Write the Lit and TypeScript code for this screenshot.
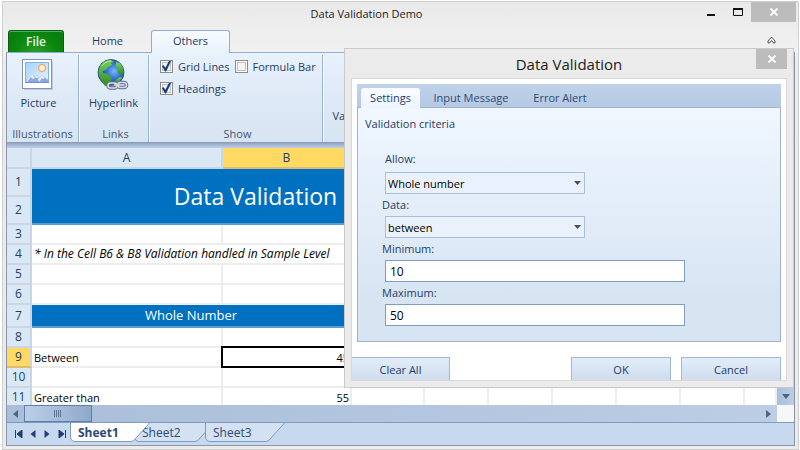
import { LitElement, html, css, svg, nothing } from "lit";
import { customElement, state } from "lit/decorators.js";
import { classMap } from "lit/directives/class-map.js";

interface Cell {
  text?: string;
  span?: number;
  cls?: string;
}

interface Row {
  n: number;
  size?: string;
  cells: Cell[];
}

const COLUMNS = ["A", "B", "C", "D", "E", "F", "G", "H", "I"];

const ROWS: Row[] = [
  { n: 1, size: "tall", cells: [] },
  { n: 2, size: "tall", cells: [] },
  { n: 3, cells: [] },
  { n: 4, cells: [{ text: "* In the Cell B6 & B8 Validation handled in Sample Level", span: 3, cls: "note" }] },
  { n: 5, cells: [] },
  { n: 6, cells: [] },
  { n: 7, size: "medium", cells: [{ text: "Whole Number", span: 2, cls: "banner" }] },
  { n: 8, cells: [] },
  { n: 9, cells: [{ text: "Between" }, { text: "45", cls: "num active" }] },
  { n: 10, cells: [] },
  { n: 11, cells: [{ text: "Greater than" }, { text: "55", cls: "num" }] },
];

const pictureIcon = svg`<svg width="32" height="32" viewBox="0 0 32 32" aria-hidden="true">
  <defs><linearGradient id="sky" x1="0" y1="0" x2="1" y2="1">
    <stop offset="0" stop-color="#a4d2f8"/><stop offset="1" stop-color="#e6f4ff"/></linearGradient></defs>
  <rect x="2" y="2" width="29" height="29" fill="#8ea3c0" opacity=".45"/>
  <rect x="0.5" y="0.5" width="29" height="29" fill="#fff" stroke="#8593ad"/>
  <rect x="3.5" y="3.5" width="23" height="20" fill="url(#sky)" stroke="#7db3ea"/>
  <circle cx="20" cy="9" r="3.5" fill="#fff3d8" stroke="#f0ad75" stroke-width="1.5"/>
  <path d="M4 23v-2l6-6 2 2 2 2 2 0 4-3 6 5v2z" fill="#8fa9e0"/>
  <path d="M4 22l6-7 3 4-2 1-2-2-4 5zM16 20l4-4 3 3-2 1-1-1-3 4z" fill="#e9f0ff"/>
  <path d="M3 23.5h24" stroke="#6b8fd4"/>
</svg>`;

const globeIcon = svg`<svg width="32" height="32" viewBox="0 0 32 32" aria-hidden="true">
  <defs><radialGradient id="sea" cx=".62" cy=".45" r=".6">
    <stop offset="0" stop-color="#7db8f5"/><stop offset=".5" stop-color="#2f6fd0"/><stop offset="1" stop-color="#173c8c"/></radialGradient>
    <linearGradient id="land" x1="0" y1="0" x2="0" y2="1">
    <stop offset="0" stop-color="#79d058"/><stop offset="1" stop-color="#2c8a2a"/></linearGradient></defs>
  <circle cx="14" cy="13.5" r="13" fill="url(#sea)" stroke="#27447c" stroke-width=".8"/>
  <path d="M3 7C6 2.5 10 1 14 1l3 2-3 1 1 2-4 2-2 3-3 1 0 2 4 1 5 3-1 4-3 4-3 1C4 21 1 17 1.5 12z" fill="url(#land)"/>
  <path d="M19 3l4 1 3 5 .5 5-3 2-3-3 1-3-3-3z" fill="url(#land)"/>
  <path d="M19 21l4-3 2 1-4 5-3 1z" fill="url(#land)"/>
  <path d="M5 7c3-4 6-5 9-5" stroke="#c9f0c0" stroke-width="1" fill="none" opacity=".8"/>
  <g fill="none" stroke="#5e6a82" stroke-width="3.6">
    <rect x="11" y="24" width="9" height="5" rx="2.5"/><rect x="21" y="23.5" width="8.5" height="5" rx="2.5"/><path d="M17 26h8"/></g>
  <g fill="none" stroke="#d5dbe6" stroke-width="1.6">
    <rect x="11" y="24" width="9" height="5" rx="2.5"/><rect x="21" y="23.5" width="8.5" height="5" rx="2.5"/><path d="M17 26h8"/></g>
</svg>`;

const validationIcon = svg`<svg width="32" height="32" viewBox="0 0 32 32" aria-hidden="true">
  <rect x="2.5" y="3.5" width="26" height="24" fill="#fff" stroke="#7f8ea8"/>
  <path d="M3 11.5h25M3 19.5h25M15.5 4v23" stroke="#9fb0c8"/>
</svg>`;

const cross = svg`<svg width="10" height="8" viewBox="0 0 10 8" aria-hidden="true">
  <path d="M1.5 0.5l7 7M8.5 0.5l-7 7" stroke="#fff" stroke-width="1.8"/></svg>`;

@customElement("app-ribbon")
export class AppRibbon extends LitElement {
  static styles = css`
    :host { display: block; color: #1e3c66; }
    button { font: inherit; color: inherit; background: none; border: 0; padding: 0; margin: 0; }
    .tabs { display: flex; align-items: stretch; height: 22px; margin-left: 2px; }
    .tabs button { padding-bottom: 2px; }
    .tabs .file {
      width: 56px; color: #eaf8e6; font-size: 12px; font-weight: 600; padding: 0;
      border: 1px solid #0b5c14; border-bottom: 0; border-radius: 3px 3px 0 0;
      background: radial-gradient(ellipse at 50% 110%, #2ba02b, #0b870e 55%, #087a0c);
      box-shadow: inset 0 1px 0 #4fae55;
    }
    .tab { width: 87px; }
    .tabs .on {
      width: 79px; border: 1px solid #92acd0; border-bottom: 0; border-radius: 3px 3px 0 0;
      background: linear-gradient(#f7fbff, #e9f2fc); margin-bottom: -1px; position: relative; padding-bottom: 3px;
    }
    .tools { margin-left: auto; width: 48px; display: grid; place-items: center; }
    .panel {
      display: flex; height: 91px; box-sizing: border-box; padding: 2px 0 0;
      border-top: 1px solid #92acd0; border-left: 1px solid #8b96a8; border-right: 1px solid #8b96a8;
      border-bottom: 1px solid #8e9bb0;
      background: linear-gradient(#e8f2fd, #dfeaf7 45%, #d7e4f2);
    }
    .group {
      display: flex; flex-direction: column; align-items: center; justify-content: space-between;
      border-right: 1px solid #9cb4d4; box-shadow: 1px 0 0 #f6faff;
      box-sizing: border-box;
    }
    .group.illus { width: 72px; }
    .group.links { width: 70px; }
    .group.show { width: 174px; }
    .group.data { width: 70px; border: 0; box-shadow: none; }
    .big { display: flex; flex-direction: column; align-items: center; gap: 4px; padding-top: 4px; line-height: 16px; }
    .big.illus { margin-right: 8px; }
    .two { line-height: 14px; width: 70px; }
    .caption { line-height: 16px; color: #3f5878; }
    .links .caption { padding-left: 4px; }
    .show .caption { padding-left: 4px; }
    .checks { display: grid; grid-template-columns: auto auto; column-gap: 5px; align-self: flex-start; padding-left: 11px; }
    .check { display: flex; align-items: center; gap: 5px; height: 22px; white-space: nowrap; }
    .check input {
      appearance: none; margin: 0; width: 13px; height: 13px; display: grid; place-items: center;
      border: 1px solid #8a8a8a; background: #f4f4f4; box-shadow: inset 0 0 0 1px #fff, inset 0 0 0 2px #c0c0c0;
    }
    .check input:checked::before {
      content: ""; width: 9px; height: 11px; background: #133e85;
      clip-path: polygon(0 52%, 16% 42%, 38% 66%, 80% 0, 100% 6%, 46% 100%, 34% 100%);
    }
  `;

  render() {
    return html`
      <nav class="tabs">
        <button class="file">File</button>
        <button class="tab">Home</button>
        <button class="tab on">Others</button>
        <button class="tools" aria-label="Collapse ribbon">
          <svg width="9" height="8" viewBox="0 0 9 8"><path d="M1 5L4.500 1 8 5v2H6.500L4.500 4.500 2.500 7H1z" fill="#fff" stroke="#4a5058"/></svg>
        </button>
      </nav>
      <div class="panel">
        <section class="group illus"><button class="big illus">${pictureIcon}Picture</button><span class="caption">Illustrations</span></section>
        <section class="group links"><button class="big">${globeIcon}Hyperlink</button><span class="caption">Links</span></section>
        <section class="group show">
          <div class="checks">
            <label class="check"><input type="checkbox" checked />Grid Lines</label>
            <label class="check"><input type="checkbox" />Formula Bar</label>
            <label class="check"><input type="checkbox" checked />Headings</label>
          </div>
          <span class="caption">Show</span>
        </section>
        <section class="group data"><button class="big">${validationIcon}<span class="two">Data Validation</span></button></section>
      </div>
    `;
  }
}

@customElement("sheet-grid")
export class SheetGrid extends LitElement {
  static styles = css`
    :host { display: flex; flex-direction: column; min-height: 0; color: #000; }
    .view { display: flex; flex: 1; min-height: 0; }
    .cells { flex: 1; min-width: 0; overflow: hidden; background: #fff; }
    table { table-layout: fixed; width: 100%; border-collapse: separate; border-spacing: 0; }
    .rowhead { width: 25px; } .ca { width: 191px; } .cb { width: 129px; } .cc { width: 73px; } .cd { width: 64px; }
    th, td {
      box-sizing: border-box; height: 20px; line-height: 14px; padding: 0 2px 1px; white-space: nowrap;
      border-right: 2px solid #ededed; border-bottom: 2px solid #ededed; font-weight: 400;
    }
    tr.tall th, tr.tall td { height: 28px; }
    tr.medium th, tr.medium td { height: 23px; }
    td { vertical-align: bottom; }
    th { background: #dae7f5; color: #243f66; border-color: #cbd6e4; text-align: center; font-size: 12px; padding: 0; }
    thead th { height: 21px; }
    th.hot { background: #ffd961; border-bottom-color: #d8bd72; }
    td.title, td.banner {
      background: #0070c0; color: #fff; text-align: center; vertical-align: middle; border-color: #5a9fd0;
    }
    td.title { font-size: 23px; line-height: 24px; padding: 0 8px 0 0; }
    td.banner { font-size: 13px; line-height: 18px; font-weight: 500; }
    td.note { font-size: 12px; font-style: italic; padding: 0 2px 2px; border-right-color: #fff; }
    td.num { text-align: right; padding-right: 1px; }
    td.active { border-color: #000; box-shadow: -2px 0 0 #000, 0 -2px 0 #000, -2px -2px 0 #000; }
    .vbar { width: 17px; display: flex; flex-direction: column; justify-content: flex-end; background: linear-gradient(90deg, #a9bfda, #bccde4); }
    button { border: 0; padding: 0; background: none; display: grid; place-items: center; }
    .vbar button { height: 18px; }
    .hrow { display: flex; height: 17px; }
    .hbar { flex: 1; display: flex; background: linear-gradient(90deg, #a9bed9, #bccde4); }
    .hbar button { width: 17px; }
    .thumb {
      width: 68px; box-sizing: border-box; border: 1px solid #5f7fa8; display: grid; place-items: center;
      background: linear-gradient(90deg, #bccfe8, #8fa9cb);
    }
    .push { margin-left: auto; }
    .corner { width: 17px; background: #f7f7f7; }
  `;

  render() {
    return html`
      <div class="view">
        <div class="cells">
          <table>
            <colgroup><col class="rowhead" /><col class="ca" /><col class="cb" /><col class="cc" />
              <col class="cd" /><col class="cd" /><col class="cd" /><col class="cd" /><col class="cd" /><col /></colgroup>
            <thead><tr><th></th>${COLUMNS.map((c) => html`<th class=${classMap({ hot: c === "B" })}>${c}</th>`)}</tr></thead>
            <tbody>${ROWS.map((r) => this.row(r))}</tbody>
          </table>
        </div>
        <div class="vbar"><button aria-label="Scroll down"><svg width="8" height="5"><path d="M0 0h8L4 5z" fill="#4f6389"/></svg></button></div>
      </div>
      <div class="hrow">
        <div class="hbar">
          <button aria-label="Scroll left"><svg width="5" height="8"><path d="M5 0v8L0 4z" fill="#4f6389"/></svg></button>
          <div class="thumb"><svg width="8" height="7"><path d="M.5 0v7M2.500 0v7M4.500 0v7M6.500 0v7" stroke="#5d7496"/></svg></div>
          <button class="push" aria-label="Scroll right"><svg width="5" height="8"><path d="M0 0v8L5 4z" fill="#4f6389"/></svg></button>
        </div>
        <div class="corner"></div>
      </div>
    `;
  }

  private row(r: Row) {
    const title = r.n === 1;
    const used = r.n <= 2 ? 4 : r.cells.reduce((n, c) => n + (c.span ?? 1), 0);
    return html`<tr class=${r.size ?? ""}>
      <th class=${classMap({ hot: r.n === 9 })}>${r.n}</th>
      ${title ? html`<td class="title" colspan="4" rowspan="2">Data Validation</td>` : nothing}
      ${r.cells.map((c) => html`<td class=${c.cls ?? ""} colspan=${c.span ?? 1}>${c.text}</td>`)}
      ${COLUMNS.slice(used).map(() => html`<td></td>`)}
    </tr>`;
  }
}

@customElement("sheet-tabs")
export class SheetTabs extends LitElement {
  @state() private current = "Sheet1";

  static styles = css`
    :host { display: flex; height: 22px; background: #c6d9ee; border-top: 1px solid #7e9ac0; }
    button { font: inherit; color: #2d4a74; background: none; border: 0; padding: 0; }
    .nav { display: flex; width: 63px; padding-left: 4px; box-sizing: border-box; }
    .nav button { width: 15px; display: grid; place-items: center; }
    .tab { position: relative; width: 80px; height: 19px; text-align: left; padding-left: 8px; line-height: 16px; margin-left: -9px; font-size: 12px; z-index: 1; }
    .tab.on { font-weight: 700; margin: 0 -7px 0 0; z-index: 2; }
    .tab svg { position: absolute; inset: 0; z-index: -1; }
  `;

  render() {
    const arrows = ["M1.500 0v8M8 0v8L3 4z", "M6.500 0v8L1.500 4z", "M1.500 0v8L6.500 4z", "M1 0v8L6 4zM7.500 0v8"];
    return html`
      <div class="nav">${arrows.map((d, i) => html`<button aria-label=${["First", "Previous", "Next", "Last"][i]}>
        <svg width="9" height="8"><path d=${d} fill="#1f3f70" stroke=${i % 3 ? "none" : "#1f3f70"} stroke-width="1"/></svg></button>`)}</div>
      ${["Sheet1", "Sheet2", "Sheet3"].map((name) => html`
        <button class=${classMap({ tab: true, on: name === this.current })} @click=${() => (this.current = name)}>
          <svg width="80" height="19"><path d="M.5 0V14Q1 18.500 5 18.500H61Q64 18.500 66 15L79.500 0" fill=${name === this.current ? "#fff" : "#d3e1f3"} stroke="#7e9ac0"/></svg>
          ${name}</button>`)}
    `;
  }
}

@customElement("validation-dialog")
export class ValidationDialog extends LitElement {
  static styles = css`
    :host {
      display: block; box-sizing: border-box; border: 1px solid #cacaca; background: #ebebeb; padding: 0 6px 6px; color: #1e3c66;
    }
    * { box-sizing: border-box; }
    button, input, select { font: inherit; margin: 0; }
    header { position: relative; height: 29px; text-align: center; color: #222; font-size: 15px; line-height: 30px; }
    .close { position: absolute; right: 0; top: 0; width: 31px; height: 20px; border: 0; padding: 0; background: #bcbcbc; display: grid; place-items: center; }
    .body { border: 1px solid #d8d8d8; background: #fff; padding-top: 5px; }
    .tabs { display: flex; height: 23px; margin: 0 5px; padding: 4px 4px 0; background: linear-gradient(#c0d2ea, #b5c9e4); }
    .tabs button { border: 0; background: none; color: #2d4a74; line-height: 20px; height: 20px; }
    .tabs .on { padding: 0; width: 59px; background: linear-gradient(#fafcff, #eef5fe); border-radius: 3px 3px 0 0; position: relative; color: #1e3c66; }
    .tabs .next { width: 102px; padding: 0; }
    .tabs .last { width: 76px; padding: 0; }
    fieldset {
      border: 1px solid #9fb3d1; margin: 0 5px; padding: 6px 0 15px 7px; min-width: 0;
      background: linear-gradient(#f0f7ff, #d7e5f3 80%);
    }
    h2 { margin: 0; font: inherit; line-height: 20px; }
    .fields { display: flex; flex-direction: column; align-items: flex-start; padding: 16px 0 0 17px; }
    label { line-height: 22px; }
    label.first { line-height: 18px; padding: 0 0 4px 3px; }
    select, input { margin-left: 3px; height: 22px; color: #000; padding: 0 0 0 2px; border: 1px solid #a9bedb; border-radius: 0; }
    select { width: 200px; appearance: none; background: #e9f2fc; }
    .pick { position: relative; }
    .pick svg { position: absolute; right: 4px; top: 9px; pointer-events: none; }
    input { width: 300px; max-width: 100%; padding-left: 4px; border-color: #7f9cc2; background: #fff; font-size: 12px; }
    footer { display: flex; gap: 10px; padding: 15px 5px 0 0; }
    footer button { width: 100px; height: 23px; color: #1e3c66; padding: 0; border: 1px solid #a3b7d6; border-bottom: 0; background: linear-gradient(#e3edf9, #cfdcee); }
    footer .clear { width: 98px; border-left: 0; margin-right: auto; }
  `;

  private pick(id: string, value: string) {
    return html`<div class="pick"><select id=${id}><option>${value}</option></select>
      <svg width="7" height="4"><path d="M0 0h7L3.500 4z" fill="#4a5058"/></svg></div>`;
  }

  render() {
    return html`
      <header>Data Validation<button class="close" aria-label="Close dialog">${cross}</button></header>
      <div class="body">
        <nav class="tabs"><button class="on">Settings</button><button class="next">Input Message</button><button class="last">Error Alert</button></nav>
        <fieldset>
          <h2>Validation criteria</h2>
          <div class="fields">
            <label class="first" for="allow">Allow:</label>${this.pick("allow", "Whole number")}
            <label for="data">Data:</label>${this.pick("data", "between")}
            <label for="min">Minimum:</label><input id="min" type="text" value="10" />
            <label for="max">Maximum:</label><input id="max" type="text" value="50" />
          </div>
        </fieldset>
        <footer><button class="clear">Clear All</button><button>OK</button><button>Cancel</button></footer>
      </div>
    `;
  }
}

@customElement("app-root")
export class AppRoot extends LitElement {
  static styles = css`
    :host {
      display: block; height: 100vh; box-sizing: border-box; padding: 1px 1px 0 2px; background: #fff;
      font: 11px "Open Sans", "Noto Sans", sans-serif;
    }
    .window {
      position: relative; display: flex; flex-direction: column; height: 100%; box-sizing: border-box;
      border: 1px solid #cfcfcf; padding: 0 3px 3px; background: linear-gradient(#e9e9e9, #f1f1f2 50px, #ebebeb 60px);
    }
    header { display: flex; justify-content: flex-end; align-items: flex-start; height: 28px; margin-right: -1px; }
    h1 { position: absolute; left: 0; right: 68px; margin: 0; text-align: center; font: inherit; color: #1c1c1c; line-height: 24px; }
    header button { border: 0; padding: 0; background: none; height: 20px; width: 27px; display: grid; place-items: center; }
    header .close { width: 45px; background: #bcbcbc; }
    .frame { flex: 1; min-height: 0; display: flex; flex-direction: column; box-sizing: border-box; border: 1px solid #8b96a8; border-top: 0; }
    .strip { height: 5px; background: linear-gradient(#8fa6c8, #c0d1e8); }
    sheet-grid { flex: 1; }
    validation-dialog { position: absolute; right: 4px; top: 46px; width: 450px; max-width: 100%; z-index: 5; }
  `;

  render() {
    return html`
      <div class="window">
        <header>
          <h1>Data Validation Demo</h1>
          <button aria-label="Minimize"><svg width="8" height="8"><path d="M0 7h8" stroke="#111" stroke-width="2"/></svg></button>
          <button aria-label="Maximize"><svg width="10" height="8"><path d="M.5 1v6.500h9V1" fill="none" stroke="#111"/><path d="M0 1h10" stroke="#111" stroke-width="2"/></svg></button>
          <button class="close" aria-label="Close">${cross}</button>
        </header>
        <app-ribbon></app-ribbon>
        <div class="frame">
          <div class="strip"></div>
          <sheet-grid></sheet-grid>
          <sheet-tabs></sheet-tabs>
        </div>
        <validation-dialog role="dialog" aria-label="Data Validation"></validation-dialog>
      </div>
    `;
  }
}
